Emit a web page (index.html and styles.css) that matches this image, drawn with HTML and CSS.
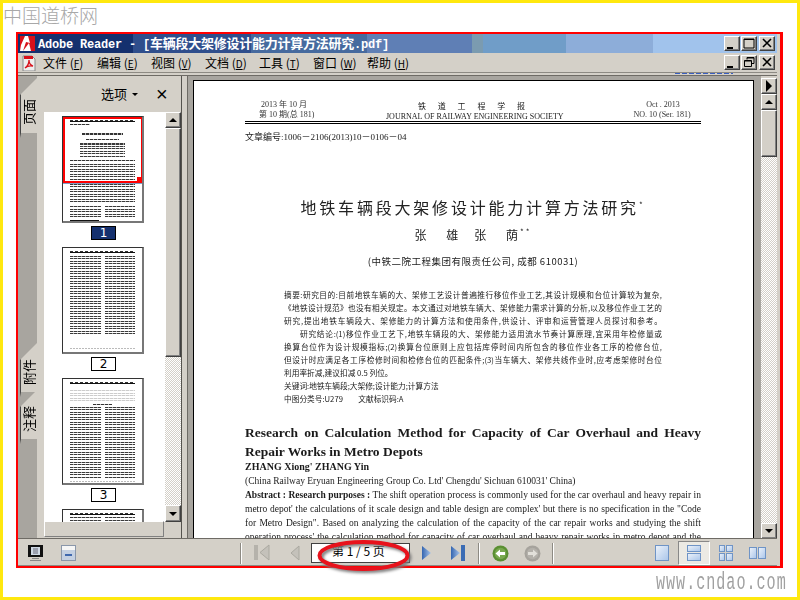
FILE: index.html
```html
<!DOCTYPE html>
<html lang="zh">
<head>
<meta charset="utf-8">
<title>Adobe Reader</title>
<link rel="stylesheet" href="styles.css">
</head>
<body>
<div class="frame">
  <header class="top"><span class="logo">中国道桥网</span></header>
  <div class="window">
    <div class="titlebar">
      <div class="bands"><i class="b1"></i><i class="b2"></i><i class="b3"></i><i class="b4"></i><i class="b5"></i><i class="b6"></i><i class="b7"></i><i class="b8"></i></div>
      <svg class="appicon" width="15" height="15" viewBox="0 0 15 15"><rect width="15" height="15" fill="#fff"/><path d="M0 0h5L1 9 0 15zM8 0h7v15h-4L9 7 3 15l3-9 4 1z" fill="#d8101a"/></svg>
      <span class="titletext">Adobe Reader - [<span class="cjk">车辆段大架修设计能力计算方法研究</span>.pdf]</span>
      <div class="winbtns">
        <button class="wb"><svg width="14" height="13" viewBox="0 0 14 13"><path d="M2 10h6v2H2z"/></svg></button>
        <button class="wb"><svg width="14" height="13" viewBox="0 0 14 13"><path d="M2 2h10v9H2z" fill="none" stroke="#000"/><path d="M2 2h10v1H2z"/></svg></button>
        <button class="wb gap"><svg width="14" height="13" viewBox="0 0 14 13"><path d="M3 2l8 8M11 2l-8 8" stroke="#000" stroke-width="1.6"/></svg></button>
      </div>
    </div>
    <div class="menubar">
      <svg class="pdficon" width="16" height="16" viewBox="0 0 16 16"><path d="M2 1h9l3 3v12H2z" fill="#eee" stroke="#888"/><path d="M3 1h9v3H3z" fill="#d8101a"/><path d="M4 13c3-2 4-5 4-8 0 3 1 5 4 6-3-.5-6 0-8 2z" fill="none" stroke="#d8101a" stroke-width="1.3"/></svg>
      <nav class="menus">
        <span class="menu">文件 (<u>F</u>)</span><span class="menu">编辑 (<u>E</u>)</span><span class="menu">视图 (<u>V</u>)</span><span class="menu">文档 (<u>D</u>)</span><span class="menu">工具 (<u>T</u>)</span><span class="menu">窗口 (<u>W</u>)</span><span class="menu">帮助 (<u>H</u>)</span>
      </nav>
      <div class="winbtns">
        <button class="wb"><svg width="14" height="13" viewBox="0 0 14 13"><path d="M2 10h6v2H2z"/></svg></button>
        <button class="wb"><svg width="14" height="13" viewBox="0 0 14 13"><path d="M5 1.5h7v6h-2M5 1.5v2M5 2h7" fill="none" stroke="#000"/><path d="M2.5 4.5h7v6h-7zM2.500 5h7" fill="none" stroke="#000"/></svg></button>
        <button class="wb gap"><svg width="14" height="13" viewBox="0 0 14 13"><path d="M3 2l8 8M11 2l-8 8" stroke="#000" stroke-width="1.6"/></svg></button>
      </div>
    </div>
    <div class="rule"><i class="dots"></i></div>
    <div class="main">
      <aside class="left">
        <div class="tabs">
          <div class="tab t1"><span>页面</span></div>
          <div class="tab t2"><span>附件</span></div>
          <div class="tab t3"><span>注释</span></div>
        </div>
        <div class="nav">
          <div class="navhead"><span class="opt">选项</span><i class="caret"></i><span class="navclose">×</span></div>
          <div class="navbody">
            <div class="thumbcol">
              <div class="thumbs">
                <div class="thumb sel-thumb">
                  <div class="mast"></div>
                  <div class="tl w30"></div>
                  <div class="tl wt"></div>
                  <div class="tl w50 c"></div>
                  <div class="block w70 c h20"></div>
                  <div class="tl wfull"></div>
                  <div class="block wfull h48"></div>
                  <div class="cols foot"><div class="block h8"></div><div class="block h8"></div></div>
                  <div class="bar"></div>
                  <div class="tl w30"></div>
                  <div class="tiny"></div>
                  <div class="redbox"><i></i></div>
                </div>
                <div class="label sel">1</div>
                <div class="thumb">
                  <div class="mast"></div>
                  <div class="cols tall"><div class="block"></div><div class="block"></div></div>
                  <div class="tiny"></div>
                </div>
                <div class="label">2</div>
                <div class="thumb">
                  <div class="mast"></div>
                  <div class="block wfull h10 faint"></div>
                  <div class="tl w30 c"></div>
                  <div class="cols mid"><div class="block"></div><div class="block"></div></div>
                  <div class="tiny"></div>
                </div>
                <div class="label">3</div>
                <div class="thumb">
                  <div class="mast"></div>
                  <div class="cols tall"><div class="block"></div><div class="block"></div></div>
                </div>
              </div>
            </div>
            <div class="vscroll">
              <button class="sb"><i class="up"></i></button>
              <div class="sthumb s1"></div>
              <div class="track"></div>
              <button class="sb big"><i class="down"></i></button>
            </div>
          </div>
          <div class="hbar"></div>
        </div>
      </aside>
      <div class="split"></div>
      <section class="doc">
        <article class="page">
          <div class="content">
            <div class="mhead">
              <div class="ml"><div class="a">2013 年 10 月</div><div>第 10 期(总 181)</div></div>
              <div class="mc"><div class="cn">铁 道 工 程 学 报</div><div class="en">JOURNAL OF RAILWAY ENGINEERING SOCIETY</div></div>
              <div class="mr"><div class="a">Oct . 2013</div><div>NO. 10 (Ser. 181)</div></div>
            </div>
            <div class="dbl"></div>
            <div class="artno">文章编号:1006－2106(2013)10－0106－04</div>
            <h1 class="h">地铁车辆段大架修设计能力计算方法研究<sup>*</sup></h1>
            <div class="auth">张 雄　张 荫<sup>**</sup></div>
            <div class="aff">(中铁二院工程集团有限责任公司, 成都 610031)</div>
            <div class="abs">
              <p class="j">摘要:研究目的:目前地铁车辆的大、架修工艺设计普遍推行移位作业工艺,其设计规模和台位计算较为复杂,</p>
              <p class="j">《地铁设计规范》也没有相关规定。本文通过对地铁车辆大、架修能力需求计算的分析,以及移位作业工艺的</p>
              <p class="j">研究,提出地铁车辆段大、架修能力的计算方法和使用条件,供设计、评审和运营管理人员探讨和参考。</p>
              <p class="j ind">研究结论:(1)移位作业工艺下,地铁车辆段的大、架修能力适用流水节奏计算原理,宜采用年检修量或</p>
              <p class="j">换算台位作为设计规模指标;(2)换算台位原则上应包括库停时间内所包含的移位作业各工序的检修台位,</p>
              <p class="j">但设计时应满足各工序检修时间和检修台位的匹配条件;(3)当车辆大、架修共线作业时,应考虑架修时台位</p>
              <p>利用率折减,建议扣减 0.5 列位。</p>
              <p>关键词:地铁车辆段;大架修;设计能力;计算方法</p>
              <p>中图分类号:U279　　文献标识码:A</p>
            </div>
            <h2 class="eh j">Research on Calculation Method for Capacity of Car Overhaul and Heavy</h2>
            <h2 class="eh">Repair Works in Metro Depots</h2>
            <div class="ea">ZHANG Xiong' ZHANG Yin</div>
            <div class="ef">(China Railway Eryuan Engineering Group Co. Ltd' Chengdu' Sichuan 610031' China)</div>
            <p class="eb j"><b>Abstract : Research purposes :</b> The shift operation process is commonly used for the car overhaul and heavy repair in</p>
            <p class="eb j">metro depot' the calculations of it scale design and table design are complex' but there is no specification in the "Code</p>
            <p class="eb j">for Metro Design". Based on analyzing the calculation of the capacity of the car repair works and studying the shift</p>
            <p class="eb j">operation process' the calculation method for capacity of car overhaul and heavy repair works in metro depot and the</p>
          </div>
        </article>
        <div class="vscroll doc-scroll">
          <button class="sb"><i class="right"></i></button>
          <button class="sb"><i class="up"></i></button>
          <div class="sthumb s2"></div>
          <div class="track"></div>
          <button class="sb"><i class="down"></i></button>
        </div>
      </section>
    </div>
    <footer class="status">
      <div class="st-left">
        <svg width="17" height="17" viewBox="0 0 17 17"><rect x="1" y="0" width="15" height="12" fill="#111"/><rect x="4" y="2" width="9" height="8" fill="#cfd8e4"/><path d="M6 4h5M6 6h5M6 8h5" stroke="#667"/><path d="M5 13h7v1H5zM3 15h11v1H3z" fill="#888"/></svg>
        <svg class="ic-doc" width="15" height="16" viewBox="0 0 15 16"><rect x=".5" y=".5" width="14" height="15" fill="#dfe3ea" stroke="#8a97aa"/><rect x="1" y="1" width="13" height="4" fill="#f6f6f6"/><rect x="1" y="5" width="13" height="10" fill="#c4d0e2"/><path d="M4 9h7v2H4z" fill="#3f68ae"/></svg>
      </div>
      <div class="vsep"></div>
      <div class="pager">
        <svg class="ic first" width="18" height="18" viewBox="0 0 18 18"><path d="M1 1h4v15H1z" fill="#b5b2ab"/><path d="M16 1v15L7 8.500z" fill="#c4c1ba" stroke="#aaa8a0"/></svg>
        <svg class="ic prev" width="10" height="16" viewBox="0 0 10 16"><path d="M9 1v14L1 8z" fill="#c4c1ba" stroke="#aaa8a0"/></svg>
        <div class="pagebox"><span>第 1 / 5 页</span>
          <svg class="ring" width="100" height="36" viewBox="0 0 100 36"><ellipse cx="48.500" cy="17.500" rx="44" ry="13.500" fill="none" stroke="#e8121c" stroke-width="4"/></svg>
        </div>
        <svg class="ic next" width="11" height="16" viewBox="0 0 11 16"><defs><linearGradient id="g1" x1="0" y1="0" x2="1" y2="0"><stop offset="0" stop-color="#3465b0"/><stop offset="1" stop-color="#a9c5ea"/></linearGradient></defs><path d="M1 1v14l9-7z" fill="url(#g1)"/></svg>
        <svg class="ic last" width="16" height="16" viewBox="0 0 16 16"><path d="M1 1v14l9-7z" fill="url(#g1)"/><path d="M11 0h4v16h-4z" fill="#3b6cb4"/></svg>
      </div>
      <div class="vsep sp2"></div>
      <svg class="ic back" width="17" height="17" viewBox="0 0 17 17"><circle cx="8.500" cy="8.500" r="8" fill="#5a8f32"/><circle cx="8.500" cy="8.500" r="5.800" fill="#78a84e"/><path d="M3.500 8.500L8 4.500v2.500h5v3H8v2.500z" fill="#fff"/></svg>
      <svg class="ic fwd" width="17" height="17" viewBox="0 0 17 17"><circle cx="8.500" cy="8.500" r="8" fill="#a6a39d"/><circle cx="8.500" cy="8.500" r="5.800" fill="#b4b1ab"/><path d="M13.500 8.500L9 4.500v2.500H4v3h5v2.500z" fill="#e2e0da"/></svg>
      <div class="vsep sp3"></div>
      <svg class="ic v1" width="14" height="16" viewBox="0 0 14 16"><defs><linearGradient id="g2" x1="0" y1="0" x2="1" y2="1"><stop offset="0" stop-color="#eef3fa"/><stop offset="1" stop-color="#a9c5ea"/></linearGradient></defs><rect x=".5" y=".5" width="13" height="15" fill="url(#g2)" stroke="#6f94c6"/></svg>
      <div class="active"><svg width="14" height="16" viewBox="0 0 14 16"><rect x=".5" y=".5" width="13" height="6" fill="url(#g2)" stroke="#6f94c6"/><rect x=".5" y="8.500" width="13" height="7" fill="url(#g2)" stroke="#6f94c6"/></svg></div>
      <svg class="ic v3" width="14" height="16" viewBox="0 0 14 16"><g fill="url(#g2)" stroke="#6f94c6"><rect x=".5" y=".5" width="5" height="6"/><rect x="7.500" y=".5" width="6" height="6"/><rect x=".5" y="8.500" width="5" height="7"/><rect x="7.500" y="8.500" width="6" height="7"/></g></svg>
      <svg class="ic v4" width="17" height="12" viewBox="0 0 17 12"><g fill="url(#g2)" stroke="#6f94c6"><rect x=".5" y=".5" width="7" height="11"/><rect x="9.500" y=".5" width="7" height="11"/></g></svg>
    </footer>
  </div>
  <footer class="bottom"><span class="wm">www.cndao.com</span></footer>
</div>
</body>
</html>
```
FILE: styles.css
```css
* { box-sizing: border-box; }
html, body { margin: 0; padding: 0; }
body { width: 800px; height: 600px; overflow: hidden; background: #fff; font-family: "Noto Sans CJK SC", "Noto Sans", sans-serif; color: #000; }
.frame { width: 800px; height: 600px; border: 3px solid #ffe80f; background: #fff; display: flex; flex-direction: column; }
.top { height: 29px; flex: none; }
.logo { display: block; color: #a8a8a8; font-size: 19px; line-height: 24px; font-weight: 300; }
.bottom { height: 29px; flex: none; display: flex; justify-content: flex-end; }
.wm { font-family: "Liberation Mono", monospace; color: #a0a0a0; font-size: 17px; line-height: 24px; margin: -2px 12px 0 0; transform: scale(.89, 1.45); transform-origin: 100% 0; letter-spacing: 1.1px; white-space: nowrap; width: 145px; text-align: right; }

.window { margin: 0 14px 0 13px; height: 536px; flex: none; border: solid #f00; border-width: 2px 3px 2px 2px; background: #d4d0c8; padding-right: 3px; display: flex; flex-direction: column; }

.titlebar { height: 19px; flex: none; position: relative; display: flex; align-items: center; padding-left: 2px; }
.bands { position: absolute; inset: 0; display: flex; }
.bands i { display: block; height: 100%; }
.b1 { width: 115px; background: #14306e; }
.b2 { width: 118px; background: #2f4e8c; }
.b3 { width: 116px; background: #466a9e; }
.b4 { width: 105px; background: #5f7fb5; }
.b5 { width: 11px; background: #7b9bb0; }
.b6 { width: 83px; background: #709dc8; }
.b7 { width: 87px; background: #8dadd9; }
.b8 { flex: 1; background: #a1c3ec; }
.appicon { position: relative; margin-right: 3px; }
.titletext { position: relative; color: #fff; font: bold 12px/19px "Liberation Mono", "Noto Sans CJK SC", monospace; letter-spacing: -.2px; white-space: nowrap; }
.cjk { font: bold 13px/19px "Noto Sans CJK SC", sans-serif; letter-spacing: -.25px; }
.winbtns { margin-left: auto; position: relative; display: flex; gap: 1px; padding-right: 2px; }
.wb { width: 16px; height: 15px; padding: 0; background: #d4d0c8; border: 1px solid; border-color: #fff #404040 #404040 #fff; box-shadow: inset -1px -1px #808080; display: flex; align-items: center; justify-content: center; }
.wb.gap { margin-left: 1px; }

.menubar { height: 19px; flex: none; display: flex; align-items: center; padding-left: 3px; }
.pdficon { flex: none; }
.menus { display: flex; margin-left: 6px; }
.menu { width: 54px; font-size: 12px; line-height: 19px; white-space: nowrap; }
.menu u { font-size: 10px; }

.rule { height: 4px; flex: none; border-top: 1px solid #8d8a83; border-bottom: 1px solid #6e6b65; display: flex; justify-content: flex-end; padding: 0 44px 0 0; }
.dots { display: block; width: 58px; height: 1px; background: repeating-linear-gradient(90deg, #3a5fc0 0 5px, transparent 5px 7px); }

.main { height: 463px; flex: none; display: flex; }
.left { width: 164px; flex: none; display: flex; border-right: 1px solid #55534e; background: #d4d0c8; }
.tabs { width: 19px; flex: none; background: #a8a59f; padding: 2px 0 0 2px; display: flex; flex-direction: column; }
.tab { width: 17px; background: #d4d0c8; clip-path: polygon(0 17px, 17px 0, 17px 100%, 0 100%); display: flex; justify-content: center; align-items: center; border-left: 1px solid #444; border-bottom: 5px solid #a8a59f; font-size: 13px; }
.tab span { writing-mode: vertical-rl; text-orientation: sideways; transform: rotate(180deg); line-height: 14px; }
.t1 { height: 60px; padding-top: 14px; }
.t2 { height: 54px; margin-top: 205px; padding-top: 10px; }
.t3 { height: 54px; margin-top: -7px; padding-top: 10px; }

.nav { flex: 1; min-width: 0; display: flex; flex-direction: column; padding-left: 7px; }
.navhead { height: 36px; flex: none; display: flex; align-items: center; padding-left: 57px; }
.opt { font-size: 13px; line-height: 18px; }
.caret { width: 0; height: 0; margin-left: 5px; border: 3px solid transparent; border-top: 3px solid #000; border-bottom: 0; }
.navclose { font: 20px/18px "Liberation Sans", sans-serif; margin-left: 18px; }
.navbody { height: 410px; flex: none; display: flex; }
.thumbcol { width: 121px; flex: none; background: #fff; overflow: hidden; padding: 4px 0 0 18px; }
.thumbs { display: flex; flex-direction: column; }
.thumb { width: 82px; height: 107px; flex: none; background: #fff; border: 1px solid #333; border-right: 2px solid #777; border-bottom: 2px solid #777; padding: 3px 7px; position: relative; display: flex; flex-direction: column; overflow: hidden; gap: 2px; }
.mast { height: 2px; flex: none; border-bottom: 1px solid #111; background: repeating-linear-gradient(90deg, #333 0 3px, #fff 3px 5px); }
.tl { height: 1px; flex: none; background: repeating-linear-gradient(90deg, #333 0 3px, #bbb 3px 4px); }
.w30 { width: 30%; } .w50 { width: 50%; } .w70 { width: 70%; } .wfull { width: 100%; }
.wt { width: 62%; height: 2px; margin: 6px auto 2px; }
.c { margin-left: auto; margin-right: auto; }
.block { flex: none; background: repeating-linear-gradient(90deg, transparent 0 3px, rgba(255,255,255,.55) 3px 4px), repeating-linear-gradient(0deg, #fff 0 1px, #3a3a3a 1px 2px, #fff 2px 2.500px); }
.h20 { height: 16px; } .h48 { height: 40px; } .h10 { height: 12px; margin-top: 4px; } .h8 { height: 12px; }
.faint { opacity: .25; }
.cols { display: grid; grid-template-columns: 1fr 1fr; gap: 4px; flex: none; }
.foot { margin-top: 1px; }
.tall { height: 80px; }
.mid { height: 72px; }
.bar { width: 44%; height: 1px; background: #111; flex: none; }
.tiny { height: 1px; flex: none; margin-top: auto; background: repeating-linear-gradient(90deg, #bbb 0 2px, #fff 2px 3px); }
.redbox { position: absolute; left: 0; top: 0; width: 80px; height: 66px; border: 2px solid #f00; outline: 1px solid #7f9fc8; }
.redbox i { position: absolute; right: 0; bottom: 0; width: 4px; height: 4px; background: #f00; }
.label { width: 25px; height: 14px; flex: none; margin: 3px 0 7px 29px; border: 1px solid #000; background: #fff; font: 12px/12px "DejaVu Sans", sans-serif; text-align: center; }
.label.sel { background: #14306e; color: #fff; }

.vscroll { width: 16px; flex: none; display: flex; flex-direction: column; background: #d4d0c8; }
.sb { width: 16px; height: 16px; flex: none; padding: 0; background: #d4d0c8; border: 1px solid; border-color: #fff #404040 #404040 #fff; box-shadow: inset -1px -1px #808080; display: flex; align-items: center; justify-content: center; }
.sb.big { height: 17px; }
.sb i { display: block; width: 0; height: 0; border: 4px solid transparent; }
.up { border-top: 0 !important; border-bottom-color: #000 !important; }
.down { border-bottom: 0 !important; border-top-color: #000 !important; }
.right { border-right: 0 !important; border-left-color: #000 !important; border-width: 6px !important; border-left-width: 6px !important; }
.sthumb { flex: none; background: #d4d0c8; border: 1px solid; border-color: #fff #404040 #404040 #fff; box-shadow: inset -1px -1px #808080; }
.s1 { height: 229px; }
.s2 { height: 47px; }
.track { flex: 1; background: repeating-conic-gradient(#d4d0c8 0 25%, #fff 0 50%) 0 0 / 2px 2px; }
.hbar { height: 16px; flex: none; width: 120px; margin-top: -1px; background: #d4d0c8; border: 1px solid; border-color: #fff #808080 #808080 #fff; }

.split { width: 6px; flex: none; background: #d4d0c8; border-right: 1px solid #6e6b65; }
.doc { flex: 1; min-width: 0; display: flex; background: #a8a59f; }
.page { width: 561px; margin: 4px 6px 0 5px; flex: none; background: #fff; border: solid #000; border-width: 1px 1px 0 1px; overflow: hidden; }
.content { padding: 0 0 0 51px; width: 507px; color: #1a1a1a; filter: blur(.3px); }
.doc-scroll { margin-left: auto; padding-top: 2px; }

.mhead { display: flex; height: 39px; font: 8px/10px "Liberation Serif", "Noto Sans CJK SC", serif; padding-top: 19px; white-space: nowrap; }
.a { margin-left: 2px; }
.ml { width: 60px; margin-left: 14px; color: #333; }
.mc { width: 176px; margin-left: 67px; text-align: center; }
.cn { font: 8px/11px "Noto Sans CJK SC", sans-serif; letter-spacing: 5px; }
.en { font-size: 8px; line-height: 12px; }
.mr { width: 60px; margin-left: 70px; color: #333; text-align: center; }
.dbl { height: 3px; margin-top: 1px; border-top: 1px solid #000; border-bottom: 1px solid #000; width: 456px; }
.artno { margin-top: 7px; font: 9px/13px "Liberation Serif", "Noto Sans CJK SC", serif; }
.h { margin: 52px 0 0; width: 456px; text-align: center; font-weight: 400; font-size: 16px; line-height: 22px; letter-spacing: 2.8px; color: #222; }
.h sup, .auth sup { font-size: 8px; line-height: 0; }
.auth { margin-top: 9px; width: 456px; text-align: center; font-size: 12px; line-height: 16px; word-spacing: 13px; letter-spacing: 2px; }
.aff { margin-top: 11px; width: 456px; text-align: center; font-size: 9.500px; line-height: 14px; letter-spacing: .5px; }
.abs { margin: 20px 0 0 39px; width: 378px; font: 7.700px/13px "Noto Sans CJK SC", sans-serif; }
.abs p { margin: 0; height: 13px; white-space: nowrap; }
.j { text-align: justify; text-align-last: justify; white-space: normal !important; }
.ind { padding-left: 16px; }
.eh { margin: 0; width: 456px; font: bold 13.500px/19px "Liberation Serif", serif; white-space: nowrap; }
.abs + .eh { margin-top: 18px; }
.ea { font: bold 10px/14px "Liberation Serif", serif; margin-top: -1px; }
.ef { font: 9.500px/14px "Liberation Serif", serif; }
.eb { margin: 0; width: 456px; font: 9.500px/14px "Liberation Serif", serif; }

.status { height: 27px; flex: none; display: flex; align-items: center; border-top: 2px solid #d4d0c8; box-shadow: 0 -1px #6e6b65; position: relative; border-bottom: 1px solid #8d8a83; }
.st-left { width: 222px; flex: none; display: flex; align-items: center; padding-left: 9px; }
.ic-doc { margin-left: 17px; }
.vsep { width: 1px; height: 21px; flex: none; background: #8d8a83; box-shadow: 1px 0 #fff; }
.pager { display: flex; align-items: center; }
.ic { flex: none; }
.first { margin-left: 12px; }
.prev { margin-left: 19px; }
.pagebox { width: 99px; height: 20px; margin-left: 11px; background: #fff; border: 1px solid #404040; position: relative; padding-left: 20px; font-size: 12px; line-height: 14px; white-space: nowrap; }
.ring { position: absolute; left: 3px; top: -6px; filter: drop-shadow(2px 2px 1.500px #777); overflow: visible; }
.next { margin-left: 11px; }
.last { margin-left: 18px; }
.sp2 { margin-left: 12px; }
.back { margin-left: 13px; }
.fwd { margin-left: 15px; }
.sp3 { margin-left: 11px; }
.v1 { margin-left: 102px; }
.active { width: 32px; height: 24px; margin-left: 9px; flex: none; background: #eceae4; border: 1px solid; border-color: #888 #fff #fff #888; display: flex; align-items: center; justify-content: center; }
.v3 { margin-left: 9px; }
.v4 { margin-left: 16px; }
```
